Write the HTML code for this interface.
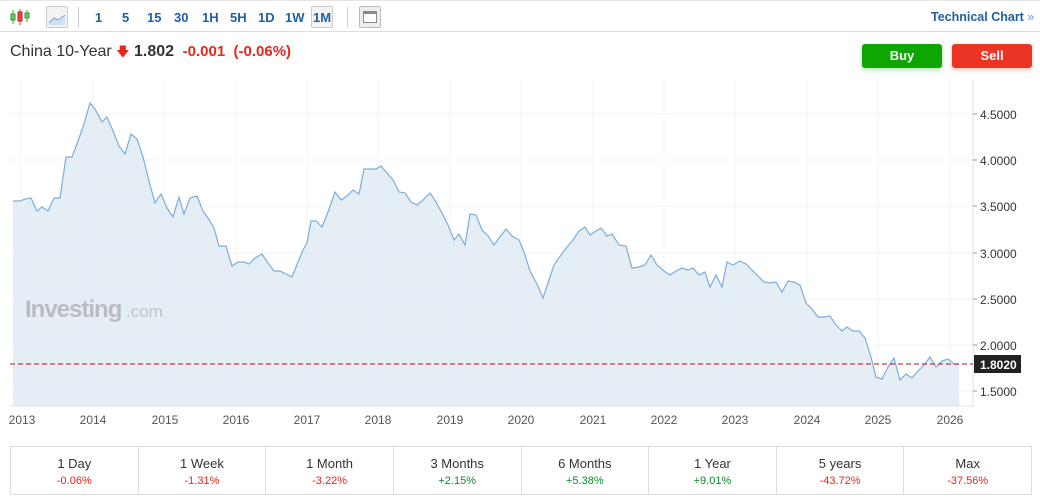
<!DOCTYPE html>
<html><head><meta charset="utf-8"><style>
*{margin:0;padding:0;box-sizing:border-box}
body{width:1040px;height:501px;background:#fff;font-family:"Liberation Sans",Arial,sans-serif;position:relative;overflow:hidden}
.top{position:absolute;left:0;top:0;width:1040px;height:32px;border-bottom:1px solid #ddd;border-top:1px solid #e5e5e5}
.tf{position:absolute;top:9px;font-size:13px;font-weight:bold;color:#1f5fa6}
.sep{position:absolute;top:6px;width:1px;height:20px;background:#ccc}
.hdr{position:absolute;left:10px;top:43px;font-size:16px;color:#333}
.btn{position:absolute;top:44px;width:80px;height:24px;border-radius:3px;color:#fff;font-weight:bold;font-size:13px;text-align:center;line-height:24px}
.tbl{position:absolute;left:10px;top:446px;width:1022px;height:49px;border:1px solid #ddd;display:flex}
.c{flex:1;border-right:1px solid #ddd;text-align:center;font-size:13px;color:#333;padding-top:9px}
.c:last-child{border-right:none}
.c b{display:block;font-weight:normal;font-size:11px;margin-top:4px}
.r{color:#e8261c}.g{color:#0b8a2b}
</style></head><body>
<div class="top">
<svg style="position:absolute;left:10px;top:7px" width="20" height="18"><line x1="3" y1="2" x2="3" y2="16" stroke="#3a3"/><rect x="1" y="6" width="4" height="6" fill="#6c6" stroke="#393"/><line x1="10" y1="1" x2="10" y2="17" stroke="#c33"/><rect x="8" y="4" width="4" height="9" fill="#e44" stroke="#b22"/><line x1="17" y1="2" x2="17" y2="14" stroke="#3a3"/><rect x="15" y="5" width="4" height="5" fill="#6c6" stroke="#393"/></svg>
<div style="position:absolute;left:46px;top:5px;width:22px;height:22px;border:1px solid #ccc;border-radius:2px;background:#f3f3f3"><svg width="20" height="20"><path d="M2 16 L7 11 L11 13 L18 8 L18 18 L2 18Z" fill="#cfe0f2"/><path d="M2 16 L7 11 L11 13 L18 8" fill="none" stroke="#7aa6d6"/></svg></div>
<div class="sep" style="left:78px"></div>
<div class="tf" style="left:95px">1</div><div class="tf" style="left:122px">5</div><div class="tf" style="left:147px">15</div><div class="tf" style="left:174px">30</div><div class="tf" style="left:202px">1H</div><div class="tf" style="left:230px">5H</div><div class="tf" style="left:258px">1D</div><div class="tf" style="left:285px">1W</div>
<div style="position:absolute;left:311px;top:5px;width:22px;height:22px;border:1px solid #ccc;border-radius:2px;background:#f3f3f3"></div><div class="tf" style="left:313px">1M</div>
<div class="sep" style="left:347px"></div>
<div style="position:absolute;left:359px;top:5px;width:22px;height:22px;border:1px solid #bbb;border-radius:2px;background:#eee"><div style="margin:4px 3px;width:14px;height:12px;border:1px solid #888;border-top:3px solid #888;background:#fff"></div></div>
<div class="tf" style="left:931px;font-size:12.5px">Technical Chart <span style="font-weight:normal;color:#6a9ad6">»</span></div>
</div>
<div class="hdr">China 10-Year <span style="color:#e8261c;font-size:13px">&#129095;</span> <b>1.802</b> <span class="r" style="font-weight:bold;font-size:15px">&nbsp;-0.001 &nbsp;(-0.06%)</span></div>
<div class="btn" style="left:862px;background:#0ea600;box-shadow:0 2px 5px rgba(14,166,0,.3)">Buy</div>
<div class="btn" style="left:952px;background:#ec3425;box-shadow:0 2px 5px rgba(236,52,37,.3)">Sell</div>
<svg style="position:absolute;left:0;top:80px" width="1040" height="360" viewBox="0 80 1040 360">
<g stroke="#f2f4f6" stroke-width="1">
<line x1="10" y1="114" x2="973" y2="114"/><line x1="10" y1="160" x2="973" y2="160"/><line x1="10" y1="206" x2="973" y2="206"/><line x1="10" y1="253" x2="973" y2="253"/><line x1="10" y1="299" x2="973" y2="299"/><line x1="10" y1="345" x2="973" y2="345"/><line x1="10" y1="391" x2="973" y2="391"/>
<line x1="21" y1="80" x2="21" y2="406"/><line x1="93" y1="80" x2="93" y2="406"/><line x1="164" y1="80" x2="164" y2="406"/><line x1="236" y1="80" x2="236" y2="406"/><line x1="307" y1="80" x2="307" y2="406"/><line x1="378" y1="80" x2="378" y2="406"/><line x1="450" y1="80" x2="450" y2="406"/><line x1="521" y1="80" x2="521" y2="406"/><line x1="593" y1="80" x2="593" y2="406"/><line x1="664" y1="80" x2="664" y2="406"/><line x1="735" y1="80" x2="735" y2="406"/><line x1="807" y1="80" x2="807" y2="406"/><line x1="878" y1="80" x2="878" y2="406"/><line x1="950" y1="80" x2="950" y2="406"/>
</g>
<path id="p" d="M13 201 L20 201 L25 199 L31 198 L37 211 L42 207 L48 211 L54 198 L60 198 L66 157 L72 157 L78 141 L84 124 L90 103 L95 109 L102 122 L107 117 L113 131 L119 146 L125 154 L131 134 L137 139 L143 157 L149 181 L155 203 L161 194 L167 208 L173 217 L179 197 L184 214 L190 198 L197 196 L203 211 L208 218 L214 228 L219 246 L226 246 L232 266 L238 262 L244 262 L249 264 L255 258 L262 254 L268 263 L274 271 L280 271 L286 274 L292 277 L298 262 L303 250 L307 243 L311 221 L316 221 L322 227 L328 212 L335 192 L341 200 L347 196 L353 190 L359 194 L364 169 L371 169 L376 169 L381 166 L387 173 L393 180 L399 192 L405 193 L411 202 L417 205 L423 200 L430 193 L436 202 L442 213 L448 225 L454 240 L459 234 L465 245 L470 214 L476 215 L482 230 L488 236 L494 245 L499 238 L506 229 L512 236 L519 240 L524 252 L530 271 L537 284 L543 298 L548 283 L554 265 L561 255 L567 247 L573 240 L579 231 L585 227 L590 235 L596 231 L601 228 L607 236 L612 234 L619 245 L626 246 L632 268 L639 267 L645 265 L651 255 L657 265 L664 271 L670 275 L676 271 L682 268 L688 270 L693 268 L699 275 L705 272 L710 287 L716 275 L722 287 L727 262 L733 265 L740 261 L746 264 L752 270 L758 276 L764 282 L770 283 L776 282 L782 292 L788 281 L794 282 L800 285 L806 303 L812 309 L818 317 L824 317 L830 316 L836 325 L842 331 L847 327 L853 331 L859 331 L865 338 L871 357 L876 377 L882 379 L888 367 L894 358 L900 380 L906 374 L912 378 L918 371 L924 365 L930 357 L936 367 L942 361 L948 359 L954 364 L959 364" fill="none"/>
<path d="M13 201 L20 201 L25 199 L31 198 L37 211 L42 207 L48 211 L54 198 L60 198 L66 157 L72 157 L78 141 L84 124 L90 103 L95 109 L102 122 L107 117 L113 131 L119 146 L125 154 L131 134 L137 139 L143 157 L149 181 L155 203 L161 194 L167 208 L173 217 L179 197 L184 214 L190 198 L197 196 L203 211 L208 218 L214 228 L219 246 L226 246 L232 266 L238 262 L244 262 L249 264 L255 258 L262 254 L268 263 L274 271 L280 271 L286 274 L292 277 L298 262 L303 250 L307 243 L311 221 L316 221 L322 227 L328 212 L335 192 L341 200 L347 196 L353 190 L359 194 L364 169 L371 169 L376 169 L381 166 L387 173 L393 180 L399 192 L405 193 L411 202 L417 205 L423 200 L430 193 L436 202 L442 213 L448 225 L454 240 L459 234 L465 245 L470 214 L476 215 L482 230 L488 236 L494 245 L499 238 L506 229 L512 236 L519 240 L524 252 L530 271 L537 284 L543 298 L548 283 L554 265 L561 255 L567 247 L573 240 L579 231 L585 227 L590 235 L596 231 L601 228 L607 236 L612 234 L619 245 L626 246 L632 268 L639 267 L645 265 L651 255 L657 265 L664 271 L670 275 L676 271 L682 268 L688 270 L693 268 L699 275 L705 272 L710 287 L716 275 L722 287 L727 262 L733 265 L740 261 L746 264 L752 270 L758 276 L764 282 L770 283 L776 282 L782 292 L788 281 L794 282 L800 285 L806 303 L812 309 L818 317 L824 317 L830 316 L836 325 L842 331 L847 327 L853 331 L859 331 L865 338 L871 357 L876 377 L882 379 L888 367 L894 358 L900 380 L906 374 L912 378 L918 371 L924 365 L930 357 L936 367 L942 361 L948 359 L954 364 L959 364 L959 406 L13 406Z" fill="#e3ecf4" fill-opacity="0.92"/>
<text x="25" y="317" font-family="Liberation Sans,sans-serif" font-size="24" font-weight="bold" fill="#b9bdc2" letter-spacing="-1">Investing</text><text x="126" y="317" font-family="Liberation Sans,sans-serif" font-size="17" fill="#bfc3c8">.com</text>
<use href="#p" stroke="#7aaedb" stroke-width="1.2"/>
<line x1="10" y1="406" x2="973" y2="406" stroke="#e3e6ea"/>
<line x1="973" y1="80" x2="973" y2="406" stroke="#dfe2e6"/>
<line x1="10" y1="364" x2="973" y2="364" stroke="#a01818" stroke-dasharray="5,3"/>
<g stroke="#999"><line x1="973" y1="114" x2="977" y2="114"/><line x1="973" y1="160" x2="977" y2="160"/><line x1="973" y1="206" x2="977" y2="206"/><line x1="973" y1="253" x2="977" y2="253"/><line x1="973" y1="299" x2="977" y2="299"/><line x1="973" y1="345" x2="977" y2="345"/><line x1="973" y1="391" x2="977" y2="391"/></g>
<g font-family="Liberation Sans,sans-serif" font-size="12" fill="#333">
<text x="980" y="119">4.5000</text><text x="980" y="165">4.0000</text><text x="980" y="211">3.5000</text><text x="980" y="258">3.0000</text><text x="980" y="304">2.5000</text><text x="980" y="350">2.0000</text><text x="980" y="396">1.5000</text>
<g fill="#555" text-anchor="middle"><text x="22" y="424">2013</text><text x="93" y="424">2014</text><text x="165" y="424">2015</text><text x="236" y="424">2016</text><text x="307" y="424">2017</text><text x="378" y="424">2018</text><text x="450" y="424">2019</text><text x="521" y="424">2020</text><text x="593" y="424">2021</text><text x="664" y="424">2022</text><text x="735" y="424">2023</text><text x="807" y="424">2024</text><text x="878" y="424">2025</text><text x="950" y="424">2026</text></g>
</g>
<rect x="974" y="355" width="47" height="18" fill="#222"/>
<text x="980" y="369" font-family="Liberation Sans,sans-serif" font-size="12" font-weight="bold" fill="#fff">1.8020</text>
</svg>
<div class="tbl">
<div class="c">1 Day<b class="r">-0.06%</b></div>
<div class="c">1 Week<b class="r">-1.31%</b></div>
<div class="c">1 Month<b class="r">-3.22%</b></div>
<div class="c">3 Months<b class="g">+2.15%</b></div>
<div class="c">6 Months<b class="g">+5.38%</b></div>
<div class="c">1 Year<b class="g">+9.01%</b></div>
<div class="c">5 years<b class="r">-43.72%</b></div>
<div class="c">Max<b class="r">-37.56%</b></div>
</div>
</body></html>
